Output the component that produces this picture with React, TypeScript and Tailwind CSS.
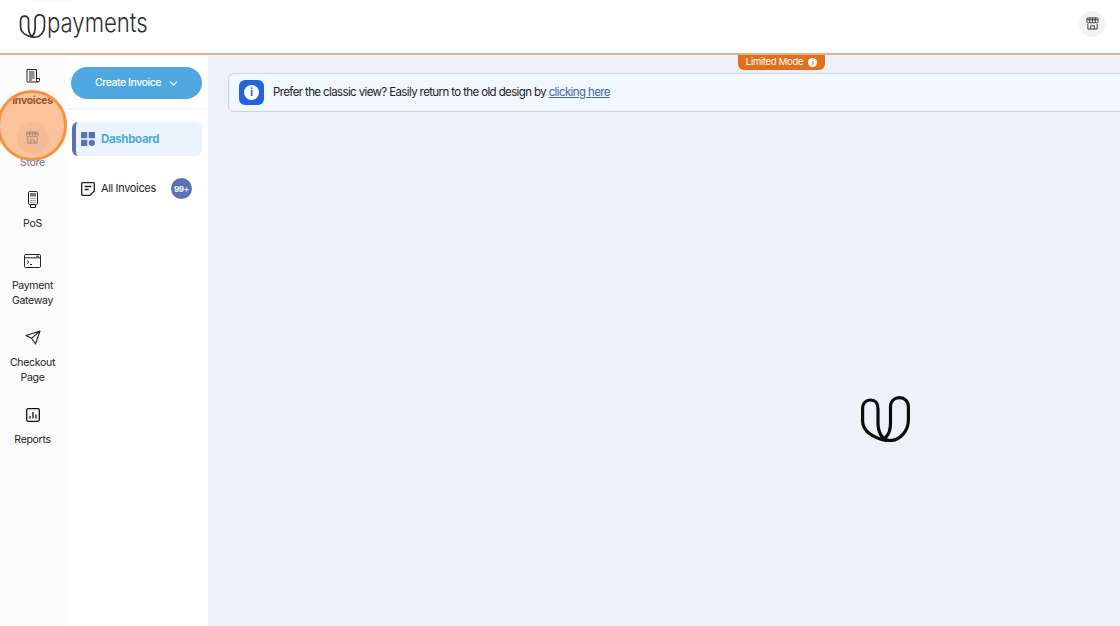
import { ChevronDown } from 'lucide-react';
import type { ReactNode } from 'react';

function LogoMark({ className }: { className?: string }) {
  return (
    <svg viewBox="0 0 49 46" fill="none" stroke="currentColor" strokeWidth="3.200" strokeLinecap="round" className={className}>
      <path d="M25 44.500C12 42 1.600 35 1.600 25V13C1.600 7 5 4 9.500 4C14 4 17 7 17 13V27C17 36 21 44.500 29 44.500C39 44.500 47.400 35 47.400 24V11C47.400 5 43.500 1.600 38.500 1.600C33.500 1.600 29.500 5 29.500 11V27C29.500 33 28 38 25 41" />
    </svg>
  );
}

function StoreIcon({ className }: { className?: string }) {
  return (
    <svg viewBox="0 0 14 14" fill="none" stroke="currentColor" strokeWidth="1" className={className}>
      <path d="M2 1h10a1 1 0 0 1 1 1v3a1.500 1.500 0 0 1-3 0a1.500 1.500 0 0 1-3 0a1.500 1.500 0 0 1-3 0a1.500 1.500 0 0 1-3 0V2a1 1 0 0 1 1-1z" />
      <path d="M4 1v4M7 1v4M10 1v4M1 3h12" />
      <path d="M2 7.500v5.500h10V7.500M5 13V9.500h4V13" />
    </svg>
  );
}

function InvoiceIcon() {
  return (
    <svg viewBox="0 0 14 14" fill="none" stroke="#222" strokeWidth="1" className="w-[14px] h-[14px]">
      <path d="M11 13H1.500a.500.500 0 0 1-.500-.500V.500h9.500V11.500A1.500 1.500 0 0 0 12 13h-1zM10.500 9.500h3v2a1.500 1.500 0 0 1-1.500 1.500" />
      <path d="M3 3h5.500M3 5h5.500M3 7h5.500M3 9h5.500M3 11h3" />
    </svg>
  );
}

function PosIcon() {
  return (
    <svg viewBox="0 0 10 17" fill="none" stroke="#222" strokeWidth="1" className="w-[10px] h-[17px]">
      <rect x="0.500" y="0.500" width="9" height="13" rx="1.200" />
      <rect x="2" y="2" width="6" height="3.500" fill="#777" stroke="none" />
      <path d="M2 7.500h6M2 9.500h6M2 11.500h6" stroke="#aaa" />
      <path d="M2.500 13.500v3h5v-3" />
    </svg>
  );
}

function GatewayIcon() {
  return (
    <svg viewBox="0 0 17 14" fill="none" stroke="#222" strokeWidth="1" className="w-[17px] h-[14px]">
      <rect x="0.500" y="0.500" width="16" height="13" rx="1" />
      <path d="M0.500 3.800h16M12 2.200h3" />
      <path d="M3 6.500l1.800 1.500L3 9.500M6 10.500h2" />
    </svg>
  );
}

function PlaneIcon() {
  return (
    <svg viewBox="0 0 16 15" fill="none" stroke="#222" strokeWidth="1.100" strokeLinejoin="round" className="w-[16px] h-[15px]">
      <path d="M15 1L1 5.500l5.500 2.800L10.500 14zM15 1L6.500 8.300" />
    </svg>
  );
}

function ReportsIcon() {
  return (
    <svg viewBox="0 0 14 14" fill="none" stroke="#111" strokeWidth="1.300" className="w-[14px] h-[14px]">
      <rect x="0.700" y="0.700" width="12.600" height="12.600" rx="1.500" />
      <path d="M4 10.500v-2.500M7 10.500V4M10 10.500V6.500" />
    </svg>
  );
}

function RailItem({ icon, label, labelClass }: { icon: ReactNode; label: ReactNode; labelClass?: string }) {
  return (
    <div className="flex flex-col items-center gap-[7px]">
      <div className="w-5 h-5 flex items-center justify-center">{icon}</div>
      <div className={`text-[10.500px] tracking-[-0.3px] leading-[15.500px] text-center ${labelClass ?? 'text-[#222]'}`}>{label}</div>
    </div>
  );
}

export default function App() {
  return (
    <div className="relative w-[1120px] h-[626px] overflow-hidden bg-white font-['Inter',sans-serif]">
      <div className="absolute left-[33px] top-0 w-[40px] h-[2px] rounded-b-full bg-[#f6fafd]" />
      <header className="h-[55px] bg-white border-b-2 border-[#dcb48e] flex items-center justify-between pl-[19px] pr-[15px]">
        <div className="flex items-center text-[#2a2e33] -mt-[5px]">
          <LogoMark className="w-[27px] h-[24px] mt-[3px]" />
          <span className="text-[27px] font-light leading-none ml-[1px] -mt-[3px] inline-block w-[100px] scale-x-[0.82] origin-left">payments</span>
        </div>
        <div className="w-[26px] h-[26px] -mt-[6px] rounded-full bg-[#f2f2f2] flex items-center justify-center text-[#333]">
          <StoreIcon className="w-[13px] h-[13px]" />
        </div>
      </header>

      <div className="flex h-[571px]">
        <aside className="w-[65px] shrink-0 bg-[#fbfbfb] pt-[11px] flex flex-col gap-[19px]">
          <RailItem icon={<InvoiceIcon />} label="Invoices" labelClass="font-bold text-[#222]" />
          <RailItem
            icon={
              <div className="w-8 h-8 shrink-0 rounded-full bg-[#ececec] flex items-center justify-center text-[#5a6fb0]">
                <StoreIcon className="w-[13px] h-[13px]" />
              </div>
            }
            label="Store"
            labelClass="text-[#5a6fb0]"
          />
          <RailItem icon={<PosIcon />} label="PoS" />
          <RailItem icon={<GatewayIcon />} label={<>Payment<br />Gateway</>} />
          <RailItem icon={<PlaneIcon />} label={<>Checkout<br />Page</>} />
          <RailItem icon={<ReportsIcon />} label="Reports" />
        </aside>

        <nav className="w-[143px] shrink-0 bg-white">
          <div className="h-[54px] border-b border-[#eceef3] pt-[12px] px-[6px]">
            <button className="w-[131px] h-[32px] pl-[2px] rounded-full bg-[#4fa9e0] text-white text-[10.500px] tracking-[-0.450px] font-medium flex items-center justify-center gap-[6px]">
              Create Invoice <ChevronDown className="w-[13px] h-[13px]" />
            </button>
          </div>
          <div className="mt-[13px] ml-[7px] w-[130px] h-[34px] rounded-md bg-[#ebf4fd] border-l-[4px] border-[#5a72b5] flex items-center pl-[5px] gap-[6px]">
            <svg viewBox="0 0 14 14" className="w-[14px] h-[14px]" fill="#5a72b5">
              <rect x="0" y="0" width="6.300" height="6.300" rx="0.600" />
              <rect x="7.700" y="0" width="6.300" height="6.300" rx="0.600" />
              <rect x="0" y="7.700" width="6.300" height="6.300" rx="0.600" />
              <circle cx="10.850" cy="10.850" r="3.150" />
            </svg>
            <span className="text-[11.500px] tracking-[-0.350px] font-bold text-[#4fa8dc] pt-[1px]">Dashboard</span>
          </div>
          <div className="mt-[22px] ml-[16px] w-[111px] h-[21px] flex items-center justify-between">
            <div className="flex items-center gap-[6px]">
              <svg viewBox="0 0 14 14" fill="none" stroke="#222" strokeWidth="1.300" strokeLinejoin="round" className="w-[14px] h-[14px]">
                <path d="M1.500.700h11a.800.800 0 0 1 .800.800v7.500l-4.300 4.300H1.500a.800.800 0 0 1-.800-.800V1.500a.800.800 0 0 1 .800-.800z" />
                <path d="M3.700 4.500h6.500M3.700 7.500h4" />
              </svg>
              <span className="text-[11px] tracking-[-0.350px] text-[#222]">All Invoices</span>
            </div>
            <span className="w-[21px] h-[21px] rounded-full bg-[#5a72b5] text-white text-[8px] tracking-[-0.200px] font-bold flex items-center justify-center">99+</span>
          </div>
        </nav>

        <main className="relative flex-1 bg-[#eef1f9] overflow-hidden pt-[18px] pl-[20px]">
          <div className="w-[1000px] h-[39px] rounded-md bg-[#f0f7fd] border border-[#cdd5e3] flex items-center pl-[10px] gap-[9px]">
            <div className="w-[25px] h-[25px] rounded-md bg-[#2463d9] flex items-center justify-center">
              <span className="w-[15px] h-[15px] rounded-full bg-white text-[#2463d9] text-[11px] font-bold leading-none flex items-center justify-center">i</span>
            </div>
            <span className="text-[11.500px] tracking-[-0.620px] text-[#222] pt-[1px]">
              Prefer the classic view? Easily return to the old design by{' '}
              <span className="underline text-[#4a64a8]">clicking here</span>
            </span>
          </div>
          <div className="absolute -top-[1px] left-[530px] w-[87px] h-[16px] rounded-b-md bg-[#e0701a] flex items-center justify-center gap-[5px] text-white text-[9.500px] tracking-[-0.300px]">
            Limited Mode
            <span className="w-[9px] h-[9px] rounded-full bg-white text-[#e0701a] text-[7px] font-bold leading-none flex items-center justify-center">i</span>
          </div>
          <div className="absolute left-[653px] top-[341px] text-[#0c0c0c]">
            <LogoMark className="w-[49px] h-[46px]" />
          </div>
        </main>
      </div>

      <div className="absolute left-[-3px] top-[90px] w-[70px] h-[71px] rounded-full border-[3px] border-[#f7913d] bg-[#fb8c3c]/50" />
    </div>
  );
}
